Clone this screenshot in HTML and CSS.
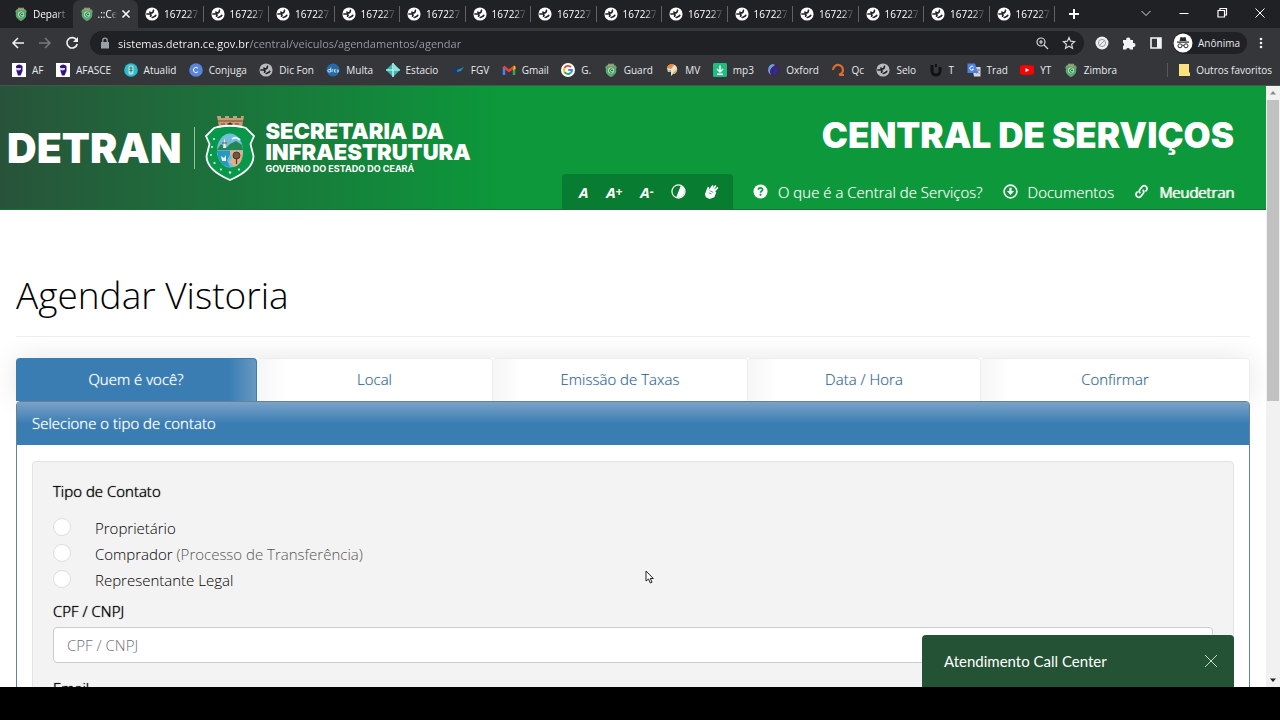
FILE: index.html
```
<!DOCTYPE html>
<html lang="pt-BR">
<head>
    <meta charset="UTF-8">
    <meta name="viewport" content="width=device-width, initial-scale=1.0">
    <title>.::Central de Serviços - Detran CE</title>
    <link rel="stylesheet" href="styles.css">
</head>
<body>
    <svg class="sprite" aria-hidden="true">
        <symbol id="globe" viewBox="0 0 16 16">
            <circle cx="8" cy="8" r="7.500" fill="currentColor"/>
            <path d="M1.500 8h4.300c1.300.2 1.700 2.600-.3 2.600M5.500 5.200c0 1.800 2 1.800 3.300 1 1.200-.6-.2-2.200 1.600-2.700M8 12.800c.2-2 3.600-.8 4.600-4" fill="none" stroke="#202124" stroke-width="1.900"/>
        </symbol>
        <symbol id="crest" viewBox="0 0 16 16">
            <path d="M4.500.8h7v2.800h-7z" fill="#a98b6a"/>
            <path d="M3 3.200h10l1 2-.7 2c.9 4-1.6 6.800-5.300 8.300C4.300 14 1.800 11.200 2.700 7.200L2 5.200z" fill="#4fa968" stroke="#8fc79d" stroke-width=".7"/>
            <circle cx="8" cy="8.500" r="3.400" fill="#c5e2cb"/>
            <path d="M9.800 7.200a2 2 0 1 0 0 2.800M8 8.500h2.500" stroke="#28794a" stroke-width="1.200" fill="none"/>
        </symbol>
        <symbol id="mask" viewBox="0 0 14 14">
            <path d="M0 0h14v14H0z" fill="#fff"/>
            <path d="M4 3q3-3 6.500 0v5L8.500 12.500H6L4.500 8z" fill="#32137f"/>
            <path d="M4 5h5v1.500l-2 1-3-.5z" fill="#d8cdf2"/>
        </symbol>
    </svg>

    <header class="browser">
        <div class="tab-strip">
            <div class="tabs">
                <button class="tab first"><svg class="icon"><use href="#crest"/></svg><span>Depart</span></button>
                <button class="tab active"><svg class="icon"><use href="#crest"/></svg><span>.::Ce</span>
                    <svg class="tab-close" viewBox="0 0 10 10"><path d="M1.500 1.500l7 7M8.500 1.500l-7 7" stroke="#fff" stroke-width="1.500"/></svg>
                </button>
                <button class="tab"><svg class="icon"><use href="#globe"/></svg><span>167227</span></button>
                <button class="tab"><svg class="icon"><use href="#globe"/></svg><span>167227</span></button>
                <button class="tab"><svg class="icon"><use href="#globe"/></svg><span>167227</span></button>
                <button class="tab"><svg class="icon"><use href="#globe"/></svg><span>167227</span></button>
                <button class="tab"><svg class="icon"><use href="#globe"/></svg><span>167227</span></button>
                <button class="tab"><svg class="icon"><use href="#globe"/></svg><span>167227</span></button>
                <button class="tab"><svg class="icon"><use href="#globe"/></svg><span>167227</span></button>
                <button class="tab"><svg class="icon"><use href="#globe"/></svg><span>167227</span></button>
                <button class="tab"><svg class="icon"><use href="#globe"/></svg><span>167227</span></button>
                <button class="tab"><svg class="icon"><use href="#globe"/></svg><span>167227</span></button>
                <button class="tab"><svg class="icon"><use href="#globe"/></svg><span>167227</span></button>
                <button class="tab"><svg class="icon"><use href="#globe"/></svg><span>167227</span></button>
                <button class="tab"><svg class="icon"><use href="#globe"/></svg><span>167227</span></button>
                <button class="tab"><svg class="icon"><use href="#globe"/></svg><span>167227</span></button>
            </div>
            <button class="new-tab" aria-label="Nova guia"><svg viewBox="0 0 12 12" width="12" height="12"><path d="M6 1v10M1 6h10" stroke="#fff" stroke-width="2"/></svg></button>
            <div class="window-buttons">
                <button aria-label="Pesquisar guias"><svg viewBox="0 0 12 12"><path d="M1.500 4L6 8.500 10.500 4" fill="none" stroke="#ddd"/></svg></button>
                <button aria-label="Minimizar"><svg viewBox="0 0 12 12"><path d="M1.500 6.500h9" stroke="#fff"/></svg></button>
                <button aria-label="Restaurar"><svg viewBox="0 0 12 12"><path d="M2 3.500h6.500V10H2zM4 3V1.500h6.500V8H9" fill="none" stroke="#fff" stroke-width="1.200"/></svg></button>
                <button aria-label="Fechar"><svg viewBox="0 0 12 12"><path d="M1.500 1.500l9 9M10.500 1.500l-9 9" stroke="#fff"/></svg></button>
            </div>
        </div>

        <div class="toolbar">
            <button class="tool" aria-label="Voltar"><svg viewBox="0 0 14 14"><path d="M13 7H2M7 2L2 7l5 5" fill="none" stroke="#f1f3f4" stroke-width="1.500"/></svg></button>
            <button class="tool" aria-label="Avançar"><svg viewBox="0 0 14 14"><path d="M1 7h11M7 2l5 5-5 5" fill="none" stroke="#777a7d" stroke-width="1.500"/></svg></button>
            <button class="tool" aria-label="Recarregar"><svg viewBox="0 0 14 14"><path d="M11.500 4A5.200 5.200 0 1 0 12.200 8" fill="none" stroke="#f1f3f4" stroke-width="1.600"/><path d="M13 1v5H8z" fill="#f1f3f4"/></svg></button>
            <div class="address-bar">
                <svg class="lock" viewBox="0 0 10 12"><path d="M1 5h8v6.500H1z" fill="#9aa0a6"/><path d="M2.800 5V3.300a2.200 2.200 0 0 1 4.400 0V5" fill="none" stroke="#9aa0a6" stroke-width="1.300"/></svg>
                <input class="address" type="text" aria-label="Endereço" value="sistemas.detran.ce.gov.br/central/veiculos/agendamentos/agendar">
                <button aria-label="Zoom"><svg viewBox="0 0 14 14"><circle cx="6" cy="6" r="4" fill="none" stroke="#d4d7da" stroke-width="1.200"/><path d="M9 9l4 4M4 6h4M6 4v4" stroke="#d4d7da" stroke-width="1.200"/></svg></button>
                <button aria-label="Favorito"><svg viewBox="0 0 14 14"><path d="M7 1.500l1.600 3.700 4 .4-3 2.700.9 4L7 10.200l-3.500 2.100.9-4-3-2.700 4-.4z" fill="none" stroke="#d4d7da" stroke-width="1.200"/></svg></button>
            </div>
            <div class="extensions">
                <button aria-label="Bloqueador"><svg viewBox="0 0 14 14"><circle cx="7" cy="7" r="6.500" fill="#eceef0"/><circle cx="7" cy="7" r="3.600" fill="none" stroke="#9b9ea1"/><path d="M4.500 9.500l5-5" stroke="#9b9ea1"/></svg></button>
                <button aria-label="Extensões"><svg viewBox="0 0 14 14"><path d="M1 4h3.300a2 2 0 1 1 3.900 0H11v3a2 2 0 1 1 0 3.900v2.600H8a2 2 0 0 0-3.800 0H1v-3.300a2 2 0 0 0 0-3.500z" fill="#f1f3f4"/></svg></button>
                <button aria-label="Painel lateral"><svg viewBox="0 0 14 14"><path d="M2 2h10v10H2z" fill="none" stroke="#f1f3f4" stroke-width="1.600"/><path d="M8 2h4v10H8z" fill="#f1f3f4"/></svg></button>
            </div>
            <button class="profile">
                <svg viewBox="0 0 20 20"><circle cx="10" cy="10" r="9.500" fill="#fff"/><path d="M6.500 8l1-4 2.500.6 2.500-.6 1 4zM4 8.500h12v1.200H4z" fill="#292a2d"/><circle cx="7" cy="12.800" r="2" fill="none" stroke="#292a2d"/><circle cx="13" cy="12.800" r="2" fill="none" stroke="#292a2d"/><path d="M9 12.500q1-.8 2 0" fill="none" stroke="#292a2d"/></svg>
                Anônima
            </button>
            <button class="more" aria-label="Mais"><svg viewBox="0 0 4 14"><g fill="#f1f3f4"><circle cx="2" cy="3" r="1.300"/><circle cx="2" cy="7" r="1.300"/><circle cx="2" cy="11" r="1.300"/></g></svg></button>
        </div>

        <nav class="bookmarks" aria-label="Favoritos">
            <div class="bookmark-list">
                <a href="#"><svg class="icon"><use href="#mask"/></svg>AF</a>
                <a href="#"><svg class="icon"><use href="#mask"/></svg>AFASCE</a>
                <a href="#"><svg class="icon" viewBox="0 0 14 14"><circle cx="7" cy="7" r="6.800" fill="#27bfd3"/><rect x="4.500" y="2.500" width="5" height="9" rx="1.500" fill="#b9dfcf"/><path d="M5.500 5h3M5.500 7.500h3M7 3.500v6" stroke="#356877"/></svg>Atualid</a>
                <a href="#"><svg class="icon" viewBox="0 0 14 14"><circle cx="7" cy="7" r="6.800" fill="#5a85dc"/><path d="M9 5.300a2.600 2.600 0 1 0 0 3.400" fill="none" stroke="#fff"/></svg>Conjuga</a>
                <a href="#"><svg class="icon grey"><use href="#globe"/></svg>Dic Fon</a>
                <a href="#"><svg class="icon" viewBox="0 0 14 14"><circle cx="7" cy="7" r="6.500" fill="#246ba8"/><path d="M4.700 4.500V9H3a1 1 0 0 1 0-2.500h1.500M6 9V6.800h1.300M9.800 6.700H8.500V9h1.400M10.700 9h1.500V7h-1.500" fill="none" stroke="#d4eaff" stroke-width=".9"/></svg>Multa</a>
                <a href="#"><svg class="icon" viewBox="0 0 14 14"><path d="M7 0l7 7-7 7-7-7z" fill="#3bb9b2"/><path d="M7 0v14M0 7h14" stroke="#dff" stroke-width="1.200"/><path d="M7 0l7 7H7z" fill="#8ce5dc"/></svg>Estacio</a>
                <a href="#"><svg class="icon" viewBox="0 0 14 14"><path d="M1 5l6 1-2 4-3-1z" fill="#153c72"/><path d="M6 7l7-3-3 4-4 1z" fill="#2389b9"/></svg>FGV</a>
                <a href="#"><svg class="icon" viewBox="0 0 14 14"><path d="M2 12V4" stroke="#4285f4" stroke-width="2.500"/><path d="M12 12V4" stroke="#34a853" stroke-width="2.500"/><path d="M1.500 3.500L7 8l5.500-4.500" fill="none" stroke="#ea4335" stroke-width="2.500"/><path d="M12 2.500l1.500 1V6L11 7z" fill="#fbbc04"/></svg>Gmail</a>
                <a href="#"><svg class="icon" viewBox="0 0 14 14"><circle cx="7" cy="7" r="7" fill="#fff"/><g fill="none" stroke-width="1.900"><path d="M10 4.200A4 4 0 0 0 3.500 5" stroke="#ea4335"/><path d="M3.500 5a4 4 0 0 0 0 4" stroke="#fbbc05"/><path d="M3.500 9a4 4 0 0 0 6 1" stroke="#34a853"/><path d="M9.500 10A4 4 0 0 0 11 7H7.200" stroke="#4285f4"/></g></svg>G.</a>
                <a href="#"><svg class="icon"><use href="#crest"/></svg>Guard</a>
                <a href="#"><svg class="icon" viewBox="0 0 14 14"><path d="M2 5c1-5 9-5 10 0 1 4-2 6-4 6l-2 2V9H3z" fill="#e9dfcf"/><path d="M2 5c1-4 5-5 7-3L6 6z" fill="#ed8a36"/><path d="M8 10l4-4c0 3-2 5-4 5z" fill="#d4ab36"/><path d="M2 8l4-1v2z" fill="#59b5db"/></svg>MV</a>
                <a href="#"><svg class="icon" viewBox="0 0 14 14"><rect width="14" height="14" rx="1.500" fill="#20bd80"/><path d="M7 2.500v6M4 6l3 3 3-3M4 11.300h6" fill="none" stroke="#fff" stroke-width="1.400"/></svg>mp3</a>
                <a href="#"><svg class="icon" viewBox="0 0 14 14"><circle cx="7.500" cy="7" r="6" fill="#492068"/><path d="M7 1a6 6 0 0 0-2 11C3 8 4 5 9 2z" fill="#65a5df"/><path d="M9 4c4 2 3 5 0 8-3-1-2-5 0-8z" fill="#25308f"/></svg>Oxford</a>
                <a href="#"><svg class="icon" viewBox="0 0 14 14"><path d="M2 7a5 5 0 1 1 8.500 3.500L8 12M8 12h5" fill="none" stroke="#e4692b" stroke-width="2.200"/></svg>Qc</a>
                <a href="#"><svg class="icon grey"><use href="#globe"/></svg>Selo</a>
                <a href="#"><svg class="icon" viewBox="0 0 14 14"><path d="M3 2v6a4 4 0 0 0 8 0V4" fill="none" stroke="#111214" stroke-width="3"/><path d="M7 1v3" stroke="#111214" stroke-width="2"/></svg>T</a>
                <a href="#"><svg class="icon" viewBox="0 0 14 14"><path d="M5 4h8.500v9.500H7z" fill="#d4d7dc"/><path d="M.5.500H8L11 10H.5z" fill="#4b82e8"/><path d="M6.500 4a2 2 0 1 0 0 2.300H5" fill="none" stroke="#fff"/><path d="M8.500 7H13M11 6v1M12 7l-3 4M9.500 8l3 3" stroke="#687b9d" stroke-width=".7"/></svg>Trad</a>
                <a href="#"><svg class="icon" viewBox="0 0 14 14"><rect y="2.300" width="14" height="9.500" rx="2.500" fill="#f00"/><path d="M5.500 5v4.200L9.300 7z" fill="#fff"/></svg>YT</a>
                <a href="#"><svg class="icon"><use href="#crest"/></svg>Zimbra</a>
            </div>
            <a class="others" href="#"><svg class="icon" viewBox="0 0 14 14"><path d="M2 1h10v8.500h1V13H2z" fill="#fae17d"/></svg>Outros favoritos</a>
        </nav>
    </header>

    <div class="viewport">
        <main class="page">
            <header class="site-header">
                <a class="logo" href="#">
                    <span class="logo-detran">DETRAN</span>
                    <svg class="logo-crest" viewBox="0 0 50 68">
                        <path d="M12 2h4v2h4V2h4v2h4V2h4v2h4V2h3l-2 11H14z" fill="#c99d75"/>
                        <path d="M13 7h25M16 10h4M22 10h6M30 10h4" stroke="#754e34" stroke-width="1.200"/>
                        <path d="M23 12v-2q2-3 4 0v2z" fill="#3b271c"/>
                        <path d="M13 13q12-2.500 24 0l4 1 8 8-3.500 8 3 12q0 14-23.500 24Q1.500 56 1.500 42l3-12L1 22l8-8z" fill="#07984b" stroke="#fff" stroke-width="1.800"/>
                        <ellipse cx="25" cy="36.500" rx="13" ry="17" fill="#72bdd7"/>
                        <path d="M12 36.500h26q0 14-9 16.500-3-4-5-5 5-4 1-7H12z" fill="#dbb08c"/>
                        <path d="M12 36.500h13v4l-3 6 3 6.500Q13 52 12 36.500z" fill="#2399c3"/>
                        <path d="M25 30l6-3 6 4 1 5H12l4-6 5 4z" fill="#248654"/>
                        <path d="M18 34l1.500-10L21 34zM16 42l3 2 2-3v6h-4z" fill="#f7efdb"/>
                        <path d="M17 29h5" stroke="#7f522e"/>
                        <path d="M27 25q4-3 8 1" stroke="#e8f5f3" stroke-width="2" fill="none"/>
                        <circle cx="31.500" cy="41.500" r="3.500" fill="#76553b" stroke="#493729"/><path d="M31.500 44v6" stroke="#493729" stroke-width="1.200"/>
                        <g fill="#e7f7e6"><circle cx="9" cy="25" r="1"/><circle cx="7" cy="33" r="1"/><circle cx="6" cy="41" r="1"/><circle cx="9.500" cy="49" r="1.100"/><circle cx="16" cy="55.500" r="1.100"/><circle cx="25" cy="58.500" r="1.200"/><circle cx="34" cy="55.500" r="1.100"/></g>
                    </svg>
                    <span class="logo-text">
                        <span>SECRETARIA DA</span>
                        <span>INFRAESTRUTURA</span>
                        <small>GOVERNO DO ESTADO DO CEARÁ</small>
                    </span>
                </a>
                <div class="header-side">
                    <div class="site-name">CENTRAL DE SERVIÇOS</div>
                    <div class="header-menu">
                        <div class="accessibility">
                            <button>A</button>
                            <button>A<small>+</small></button>
                            <button>A<small>-</small></button>
                            <button aria-label="Contraste"><svg viewBox="0 0 16 16"><circle cx="8" cy="8" r="7" fill="none" stroke="#fff" stroke-width="1.300"/><path d="M10.500 1.500a7 7 0 0 1-5 13z" fill="#fff"/></svg></button>
                            <button aria-label="Libras"><svg viewBox="0 0 16 16"><path d="M2 8l2-5 1.500.5L5 6l4-5 1.300 1L8.500 5 12 1l1.200 1-2.600 4L14.500 3l.8 1.200L12 8l1 1-2 5-5 2-4-2-1-3z" fill="#fff"/><path d="M6 7l4 2M5 9.500l3 1" stroke="#08752f" stroke-width=".7"/></svg></button>
                        </div>
                        <a href="#"><svg viewBox="0 0 16 16"><circle cx="8" cy="8" r="7.500" fill="#fff"/><path d="M5.800 6.200c0-3 4.500-2.700 4.400-.1C10.200 7.600 8 7.600 8 9.300M8 10.500v2" fill="none" stroke="#0c983b" stroke-width="1.900"/></svg>O que é a Central de Serviços?</a>
                        <a href="#"><svg viewBox="0 0 16 16"><circle cx="8" cy="8" r="6.800" fill="none" stroke="#fff" stroke-width="1.700"/><path d="M8 4v4" stroke="#fff" stroke-width="2.400"/><path d="M4.200 7.500h7.600L8 11.800z" fill="#fff"/></svg>Documentos</a>
                        <a class="strong" href="#"><svg viewBox="0 0 16 16"><g fill="none" stroke="#fff" stroke-width="1.800"><path d="M6.800 9.800a2.900 2.900 0 0 1-.6-4l2.500-3a3 3 0 0 1 4.600 3.800l-1.200 1.500"/><path d="M9.200 6.200a2.900 2.900 0 0 1 .6 4l-2.500 3a3 3 0 0 1-4.600-3.800l1.200-1.500"/></g></svg>Meudetran</a>
                    </div>
                </div>
            </header>

            <div class="content">
                <h1>Agendar Vistoria</h1>
                <nav class="steps">
                    <a class="current" href="#">Quem é você?</a>
                    <a href="#">Local</a>
                    <a href="#">Emissão de Taxas</a>
                    <a href="#">Data / Hora</a>
                    <a href="#">Confirmar</a>
                </nav>
                <section class="panel">
                    <h2>Selecione o tipo de contato</h2>
                    <form class="well">
                        <fieldset>
                            <legend>Tipo de Contato</legend>
                            <label class="option"><input type="radio" name="tipo">Proprietário</label>
                            <label class="option"><input type="radio" name="tipo"><span>Comprador <em>(Processo de Transferência)</em></span></label>
                            <label class="option"><input type="radio" name="tipo">Representante Legal</label>
                        </fieldset>
                        <label class="field-label" for="cpf">CPF / CNPJ</label>
                        <input class="field" type="text" id="cpf" placeholder="CPF / CNPJ">
                        <label class="field-label" for="email">Email</label>
                        <input class="field" type="text" id="email" placeholder="Email">
                    </form>
                </section>
            </div>
        </main>

        <div class="scrollbar">
            <svg viewBox="0 0 14 14"><path d="M4 8.500L7 5l3 3.500z" fill="#8a8a8a"/></svg>
            <div class="thumb"></div>
            <svg viewBox="0 0 14 14"><path d="M4 5.500L7 9l3-3.500z" fill="#222"/></svg>
        </div>

        <aside class="call-center">
            Atendimento Call Center
            <button aria-label="Fechar atendimento"><svg viewBox="0 0 14 14"><path d="M1 1l12 12M13 1L1 13" stroke="#c5dccb"/></svg></button>
        </aside>
        <svg class="pointer" viewBox="0 0 10 14"><path d="M1 1v10l2.500-2 1.800 4 1.700-.8L5.300 8.500h3z" fill="#fff" stroke="#222"/></svg>
    </div>
    <div class="bottom-bar"></div>
</body>
</html>
```

FILE: styles.css
```
* {
    box-sizing: border-box;
}
body {
    margin: 0;
    height: 100vh;
    display: flex;
    flex-direction: column;
    overflow: hidden;
    font-family: "Open Sans", "Noto Sans", sans-serif;
    font-size: 15px;
    font-weight: 300;
    color: #000;
    background: #fff;
}
button {
    padding: 0;
    border: none;
    background: none;
    color: inherit;
    font: inherit;
    cursor: pointer;
}
a {
    color: inherit;
    text-decoration: none;
}
svg {
    display: block;
    flex: none;
}
.sprite {
    display: none;
}
.icon {
    width: 14px;
    height: 14px;
}
.grey {
    color: #b8bbbe;
}

/* browser window */
.browser {
    flex: none;
    background: #35363a;
    color: #e8eaed;
    font-size: 10px;
    font-weight: 400;
    border-bottom: 1px solid #3d5a48;
}
.tab-strip {
    display: flex;
    height: 28px;
    background: #202124;
}
.tabs {
    display: flex;
    flex: 1;
    min-width: 0;
    padding-left: 7px;
}
.tab {
    display: flex;
    flex: 1 1 0;
    align-items: center;
    gap: 5px;
    min-width: 0;
    padding: 0 4px 0 7px;
    color: #fff;
    background: linear-gradient(#606266, #606266) right center / 1px 16px no-repeat;
}
.tab.first {
    background: none;
}
.tab span {
    flex: 1;
    overflow: hidden;
    white-space: nowrap;
    text-align: left;
    mask-image: linear-gradient(to right, #000 60%, transparent);
}
.tab.active {
    gap: 4px;
    background: #35363a;
    border-radius: 7px 7px 0 0;
}
.tab-close {
    width: 10px;
    height: 10px;
    margin-right: 3px;
}
.new-tab {
    display: flex;
    align-items: center;
    justify-content: center;
    width: 38px;
}
.window-buttons {
    display: flex;
    justify-content: flex-end;
    width: 187px;
    padding-right: 1px;
}
.window-buttons button {
    display: flex;
    width: 38px;
    align-items: center;
    justify-content: center;
    padding-bottom: 3px;
}
.window-buttons svg {
    width: 12px;
    height: 12px;
}
.toolbar {
    display: flex;
    align-items: center;
    height: 30px;
    padding: 0 17px 0 4px;
}
.tool {
    display: flex;
    justify-content: center;
    width: 27px;
}
.tool svg, .extensions svg, .address-bar button svg {
    width: 14px;
    height: 14px;
}
.address-bar {
    display: flex;
    flex: 1;
    align-items: center;
    gap: 13px;
    height: 24px;
    margin-left: 5px;
    padding: 0 8px 0 10px;
    border-radius: 12px;
    background: #202124;
}
.lock {
    width: 10px;
    height: 12px;
}
.address {
    flex: 1;
    min-width: 0;
    margin-left: -5px;
    padding: 0;
    border: none;
    outline: none;
    font: 11px "Open Sans", "Noto Sans", sans-serif;
    color: transparent;
    background: linear-gradient(to right, #fff 131px, #9aa0a6 131px);
    background-clip: text;
}
.extensions {
    display: flex;
    gap: 13px;
    padding: 0 10px 0 11px;
}
.profile {
    display: flex;
    align-items: center;
    gap: 5px;
    height: 22px;
    padding-right: 7px;
    border-radius: 11px;
    background: #202124;
}
.profile svg {
    width: 20px;
    height: 20px;
}
.more {
    margin-left: 12px;
}
.more svg {
    width: 4px;
    height: 14px;
}
.bookmarks {
    display: flex;
    align-items: center;
    gap: 50px;
    height: 27px;
    padding: 0 8px 3px 12px;
    white-space: nowrap;
}
.bookmark-list {
    display: flex;
    flex: 1;
    justify-content: space-between;
}
.bookmarks a {
    display: flex;
    align-items: center;
    gap: 6px;
}
.bookmarks .others {
    padding-left: 9px;
    gap: 5px;
    border-left: 1px solid #55585c;
}

/* site */
.viewport {
    position: relative;
    display: flex;
    flex: 1;
    min-height: 0;
}
.page {
    flex: 1;
    min-width: 0;
    overflow: hidden;
}
.site-header {
    display: flex;
    justify-content: space-between;
    height: 124px;
    padding: 0 32px 0 7px;
    color: #fff;
    background: linear-gradient(to right, #28533a, #0c983b 500px);
    border-bottom: 1px solid #167235;
}
.logo {
    display: flex;
    align-items: center;
    font-family: Inter, sans-serif;
    font-weight: 900;
}
.logo-detran {
    padding-right: 13px;
    border-right: 1px solid #8fc39c;
    font-size: 41px;
    line-height: 42px;
}
.logo-crest {
    width: 50px;
    height: 68px;
    margin: 0 10px;
}
.logo-text {
    display: flex;
    flex-direction: column;
    font-size: 22px;
    line-height: 21px;
}
.logo-text small {
    font-size: 9px;
    font-weight: 700;
    line-height: 12px;
}
.header-side {
    display: flex;
    flex-direction: column;
    justify-content: space-between;
    align-items: flex-end;
}
.site-name {
    margin-top: 28px;
    font-family: Inter, sans-serif;
    font-size: 35px;
    font-weight: 900;
    line-height: 42px;
}
.header-menu {
    display: flex;
    align-items: center;
    gap: 20px;
    text-shadow: 0 0 1px rgba(255, 255, 255, 0.6);
}
.header-menu a {
    display: flex;
    align-items: center;
    gap: 10px;
}
.header-menu svg {
    width: 15px;
    height: 15px;
}
.header-menu .strong {
    text-shadow: 0 0 1px #fff, 1px 0 0 #fff;
}
.accessibility {
    display: flex;
    align-items: center;
    justify-content: space-between;
    width: 171px;
    height: 35px;
    padding: 0 14px 0 17px;
    border-radius: 4px 4px 0 0;
    background: #087c30;
    text-shadow: none;
}
.accessibility button {
    display: flex;
    align-items: center;
    font-style: italic;
    font-weight: 700;
}
.accessibility small {
    font-size: 12px;
}
.content {
    padding: 0 16px;
}
h1 {
    margin: 0 0 21px;
    padding: 58px 0 14px;
    border-bottom: 1px solid #eee;
    font-size: 37px;
    font-weight: 300;
    line-height: 54px;
}
.steps {
    display: grid;
    grid-template-columns: 241fr 236fr 255fr 233fr 269fr;
    box-shadow: 0 0 28px rgba(0, 0, 0, 0.1);
}
.steps a {
    padding: 9px 10px 11px;
    line-height: 22px;
    text-align: center;
    color: #2f648d;
    background: linear-gradient(to right, #f6f6f6, #fff 30px);
    border: 1px solid #eee;
    border-width: 1px 1px 0 0;
    border-radius: 4px 4px 0 0;
    text-shadow: 0 0 1px rgba(47, 100, 141, 0.4);
}
.steps .current {
    color: #fff;
    background: linear-gradient(to left, #6798c1, #397db3 28px);
    border-color: #397db3;
    text-shadow: 0 0 1px #fff;
}
.panel {
    border: 1px solid #668099;
    border-radius: 4px 4px 0 0;
}
.panel h2 {
    margin: 0;
    padding: 9px 15px 10px;
    font-size: 15px;
    font-weight: 300;
    line-height: 24px;
    color: #fff;
    background: linear-gradient(#7ba2c7, #397db3 22px);
    text-shadow: 0 0 1px #fff;
}
.well {
    margin: 16px 15px;
    padding: 18px 20px;
    background: #f3f3f3;
    border: 1px solid #e3e3e3;
    border-radius: 4px;
}
fieldset {
    margin: 0;
    padding: 0;
    border: none;
}
legend {
    margin-bottom: 13px;
    padding: 0;
    line-height: 22px;
    text-shadow: 0 0 1px #000;
}
.option {
    display: flex;
    gap: 24px;
    height: 26px;
    line-height: 26px;
}
.option input {
    appearance: none;
    width: 18px;
    height: 18px;
    margin: 3px 0 0;
    border: 1px solid #ddd;
    border-radius: 50%;
    background: #fff;
}
.option em {
    font-style: normal;
    color: #555;
}
.field-label {
    display: block;
    margin: 7px 0 5px;
    line-height: 22px;
    text-shadow: 0 0 1px #000;
}
.field {
    display: block;
    width: 100%;
    height: 36px;
    margin-bottom: 14px;
    padding: 0 13px;
    border: 1px solid #ccc;
    border-radius: 4px;
    background: #fff;
    font: inherit;
}
.field::placeholder {
    color: #6c7176;
}
.scrollbar {
    display: flex;
    flex-direction: column;
    width: 14px;
    background: #f1f1f1;
}
.scrollbar svg {
    width: 14px;
    height: 14px;
}
.thumb {
    height: 50%;
    margin: 0 1px auto;
    background: #c1c1c1;
}
.call-center {
    position: absolute;
    right: 46px;
    bottom: 0;
    display: flex;
    align-items: center;
    justify-content: space-between;
    width: 312px;
    height: 52px;
    padding: 0 16px 0 22px;
    border-radius: 4px 4px 0 0;
    background: #235235;
    color: #fff;
    font-family: Lato, sans-serif;
    font-weight: 400;
}
.call-center svg {
    width: 14px;
    height: 14px;
}
.pointer {
    position: absolute;
    left: 645px;
    top: 484px;
    width: 10px;
    height: 14px;
}
.bottom-bar {
    flex: none;
    height: 33px;
    background: #000;
}
```
